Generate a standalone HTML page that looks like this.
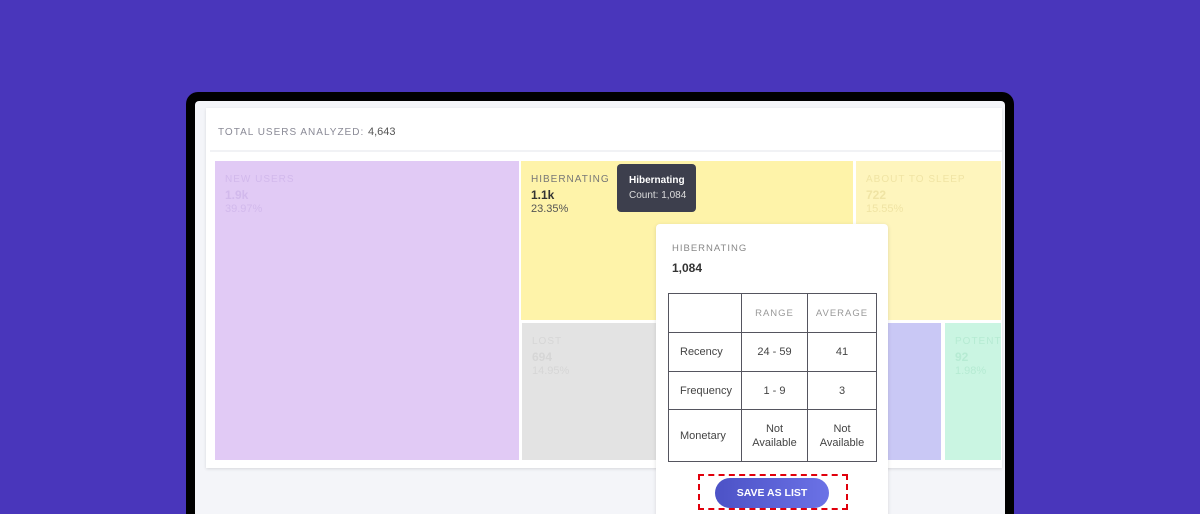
<!DOCTYPE html>
<html><head><meta charset="utf-8"><style>
*{margin:0;padding:0;box-sizing:border-box}
html,body{width:1200px;height:514px;overflow:hidden}
body{background:#4936bb;position:relative;font-family:"Liberation Sans",sans-serif}
.abs{position:absolute}
.lbl{font-size:10px;letter-spacing:1px;text-transform:uppercase}
.cell .l{position:absolute;left:10px;top:13px;font-size:10px;letter-spacing:1px}
.cell .n{position:absolute;left:10px;top:27px;font-size:12px;font-weight:bold}
.cell .p{position:absolute;left:10px;top:42px;font-size:11px}
td{border:1px solid #55555f;font-size:11px;color:#444;text-align:center;vertical-align:middle}
</style></head><body>
<div class="abs" style="left:186px;top:92px;width:828px;height:422px;background:#000;border-radius:12px 12px 0 0"></div>
<div class="abs" style="left:195px;top:101px;width:810px;height:413px;background:#f4f5f9;border-radius:4px 4px 0 0"></div>
<div class="abs" style="left:206px;top:108px;width:796px;height:360px;background:#fff;box-shadow:0 1px 3px rgba(0,0,0,.12)"></div>
<div class="abs lbl" style="left:218px;top:126px;color:#8a8a96">Total users analyzed: <span style="color:#555;font-size:11px;letter-spacing:0">4,643</span></div>
<div class="abs" style="left:210px;top:150px;width:792px;height:2px;background:#f1f2f5"></div>

<div class="abs cell" style="left:215px;top:161px;width:304px;height:299px;background:#e1caf5;color:#d2b9ec"><div class="l">NEW USERS</div><div class="n">1.9k</div><div class="p">39.97%</div></div>
<div class="abs cell" style="left:521px;top:161px;width:332px;height:159px;background:#fef3a9;color:#555"><div class="l" style="color:#777">HIBERNATING</div><div class="n" style="color:#333">1.1k</div><div class="p">23.35%</div></div>
<div class="abs cell" style="left:856px;top:161px;width:145px;height:159px;background:#fef5bd;color:#f0e4a4"><div class="l">ABOUT TO SLEEP</div><div class="n">722</div><div class="p">15.55%</div></div>
<div class="abs cell" style="left:522px;top:323px;width:170px;height:137px;background:#e3e3e3;color:#d6d6d6"><div class="l">LOST</div><div class="n">694</div><div class="p">14.95%</div></div>
<div class="abs" style="left:880px;top:323px;width:61px;height:137px;background:#c9c8f5"></div>
<div class="abs cell" style="left:945px;top:323px;width:56px;height:137px;background:#caf5e2;color:#b6ebd3;overflow:hidden"><div class="l">POTENTIAL</div><div class="n">92</div><div class="p">1.98%</div></div>

<div class="abs" style="left:617px;top:164px;width:79px;height:48px;background:#3d3f4d;border-radius:4px;color:#fff;padding:11px 0 0 12px"><div style="font-size:10px;font-weight:bold">Hibernating</div><div style="font-size:10px;margin-top:4px;color:#ddd">Count: 1,084</div></div>

<div class="abs" style="left:656px;top:224px;width:232px;height:300px;background:#fff;border-radius:4px;box-shadow:0 1px 4px rgba(0,0,0,.12)">
<div class="abs lbl" style="left:16px;top:19px;color:#888;font-size:9.5px">Hibernating</div>
<div class="abs" style="left:16px;top:37px;color:#333;font-size:12px;font-weight:bold">1,084</div>
<table class="abs" style="left:12px;top:69px;width:209px;height:169px;border-collapse:collapse">
<tr style="height:39px"><td style="width:73px"></td><td style="width:66px;color:#999;font-size:9.5px;letter-spacing:1px">RANGE</td><td style="color:#999;font-size:9.5px;letter-spacing:1px">AVERAGE</td></tr>
<tr style="height:39px"><td style="text-align:left;padding-left:11px">Recency</td><td>24 - 59</td><td>41</td></tr>
<tr style="height:38px"><td style="text-align:left;padding-left:11px">Frequency</td><td>1 - 9</td><td>3</td></tr>
<tr><td style="text-align:left;padding-left:11px">Monetary</td><td style="line-height:14px">Not<br>Available</td><td style="line-height:14px">Not<br>Available</td></tr>
</table>
<div class="abs" style="left:42px;top:250px;width:150px;height:36px;border:2px dashed #e0000c"></div>
<div class="abs" style="left:59px;top:254px;width:114px;height:30px;border-radius:15px;background:linear-gradient(90deg,#4c52c6,#6b72e6);color:#fff;font-size:10.5px;font-weight:bold;text-align:center;line-height:30px">SAVE AS LIST</div>
</div>
</body></html>
